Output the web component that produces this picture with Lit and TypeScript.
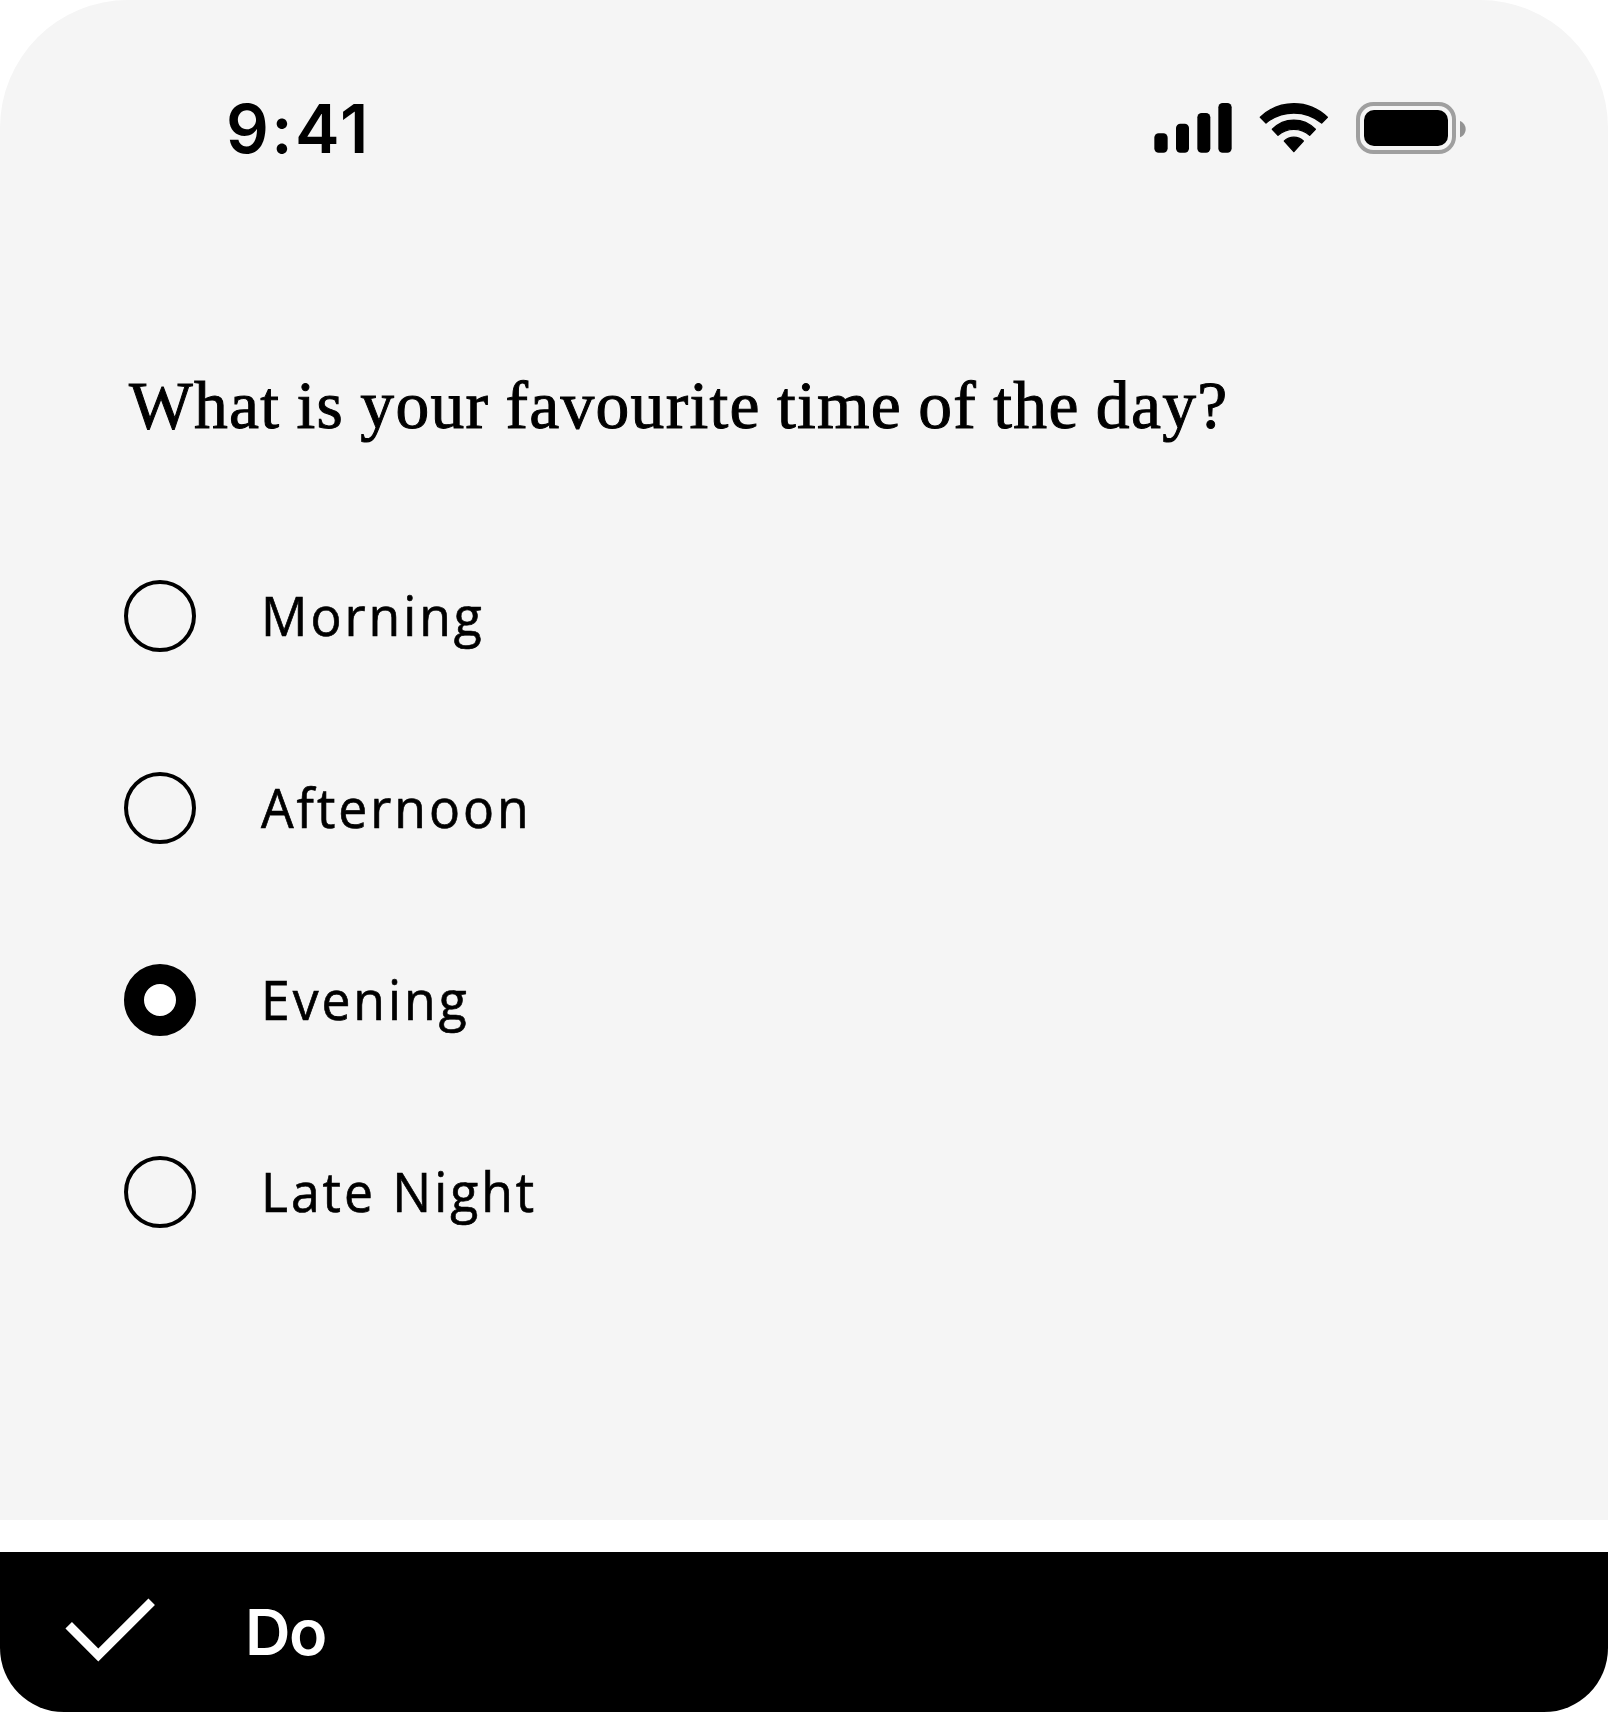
import { LitElement, html, css } from "lit";
import { customElement, property, state } from "lit/decorators.js";
import { classMap } from "lit/directives/class-map.js";

@customElement("status-bar")
class StatusBar extends LitElement {
  static styles = css`
    :host {
      display: flex;
      justify-content: space-between;
      align-items: center;
      height: 75px;
      padding: 90px 142px 0 226px;
    }
    .time {
      padding-top: 1px;
      font: 600 67px/75px Inter, "Liberation Sans", sans-serif;
      letter-spacing: 2.4px;
    }
    .icons {
      display: flex;
      gap: 27px;
    }
    svg {
      display: block;
      height: 75px;
    }
    .signal { width: 78px; }
    .wifi { width: 70px; }
    .battery { width: 110px; }
  `;

  render() {
    return html`
      <div class="time">9:41</div>
      <div class="icons">
        <svg class="signal" viewBox="42 0 234 225">
          <rect x="43" y="130" width="40" height="58" rx="13" />
          <rect x="108" y="101" width="39" height="87" rx="13" />
          <rect x="172" y="69" width="39" height="119" rx="13" />
          <rect x="235" y="39" width="40" height="149" rx="13" />
        </svg>
        <svg class="wifi" viewBox="357 0 210 225" stroke="#000" stroke-width="4" stroke-linejoin="round">
          <path d="M361 82A144 144 0 0 1 562 82L545 99A131 131 0 0 0 378 99Z" />
          <path d="M397 118A89 89 0 0 1 526 118L509 136A72 72 0 0 0 414 136Z" />
          <path d="M433 153A41 41 0 0 1 490 153L461.500 185Z" />
        </svg>
        <svg class="battery" viewBox="648 0 330 225">
          <rect x="654" y="42" width="288" height="144" rx="46" fill="none" stroke="#9f9f9f" stroke-width="12" />
          <rect x="672" y="60" width="252" height="108" rx="30" />
          <path d="M960 93C970 97 977 107 977 117.500S970 138 960 142Z" fill="#939393" />
        </svg>
      </div>
    `;
  }
}

@customElement("radio-option")
class RadioOption extends LitElement {
  @property() label = "";
  @property({ type: Boolean }) selected = false;

  static styles = css`
    :host {
      display: flex;
      align-items: center;
      height: 72px;
      gap: 65px;
      cursor: pointer;
    }
    .ring {
      box-sizing: border-box;
      width: 72px;
      height: 72px;
      border: 4px solid #000;
      border-radius: 50%;
    }
    .ring.on {
      border-width: 20px;
      background: #fff;
    }
    .label {
      padding-bottom: 2px;
      font: 400 55.5px/72px "Open Sans", "Noto Sans", sans-serif;
      letter-spacing: 3.2px;
      white-space: nowrap;
      transform: scaleX(0.93);
      transform-origin: left;
      -webkit-text-stroke: 0.7px #000;
    }
  `;

  render() {
    return html`
      <span class=${classMap({ ring: true, on: this.selected })}></span>
      <span class="label">${this.label}</span>
    `;
  }
}

@customElement("app-root")
class AppRoot extends LitElement {
  @state() private choice = "Evening";
  private options = ["Morning", "Afternoon", "Evening", "Late Night"];

  static styles = css`
    :host {
      display: flex;
      flex-direction: column;
      gap: 32px;
      height: 1712px;
      background: #fff;
      color: #000;
    }
    .screen {
      height: 1520px;
      background: #f5f5f5;
      border-radius: 128px 128px 0 0;
    }
    .question {
      margin: 201px 0 0 129px;
      font: 400 67.5px/80px "Liberation Serif", serif;
      letter-spacing: 1.3px;
      word-spacing: -2px;
      white-space: nowrap;
      -webkit-text-stroke: 1px #000;
    }
    .options {
      display: flex;
      flex-direction: column;
      gap: 120px;
      margin: 134px 0 0 124px;
    }
    .action {
      display: flex;
      align-items: center;
      height: 160px;
      padding-left: 64px;
      gap: 89px;
      background: #000;
      color: #fff;
      border-radius: 0 0 64px 64px;
    }
    .check {
      display: block;
      width: 92px;
      height: 160px;
    }
    .action-label {
      font: 600 63px/80px Inter, "Liberation Sans", sans-serif;
      letter-spacing: -1.5px;
    }
  `;

  render() {
    return html`
      <div class="screen">
        <status-bar></status-bar>
        <div class="question">What is your favourite time of the day?</div>
        <div class="options">
          ${this.options.map(
            (o) => html`<radio-option
              .label=${o}
              .selected=${o === this.choice}
              @click=${() => (this.choice = o)}
            ></radio-option>`
          )}
        </div>
      </div>
      <div class="action">
        <svg class="check" viewBox="64 0 92 160" fill="none" stroke="#fff" stroke-width="9.200">
          <path d="M68.700 73.300L98.300 102.900L151.700 49.700" />
        </svg>
        <span class="action-label">Do</span>
      </div>
    `;
  }
}
